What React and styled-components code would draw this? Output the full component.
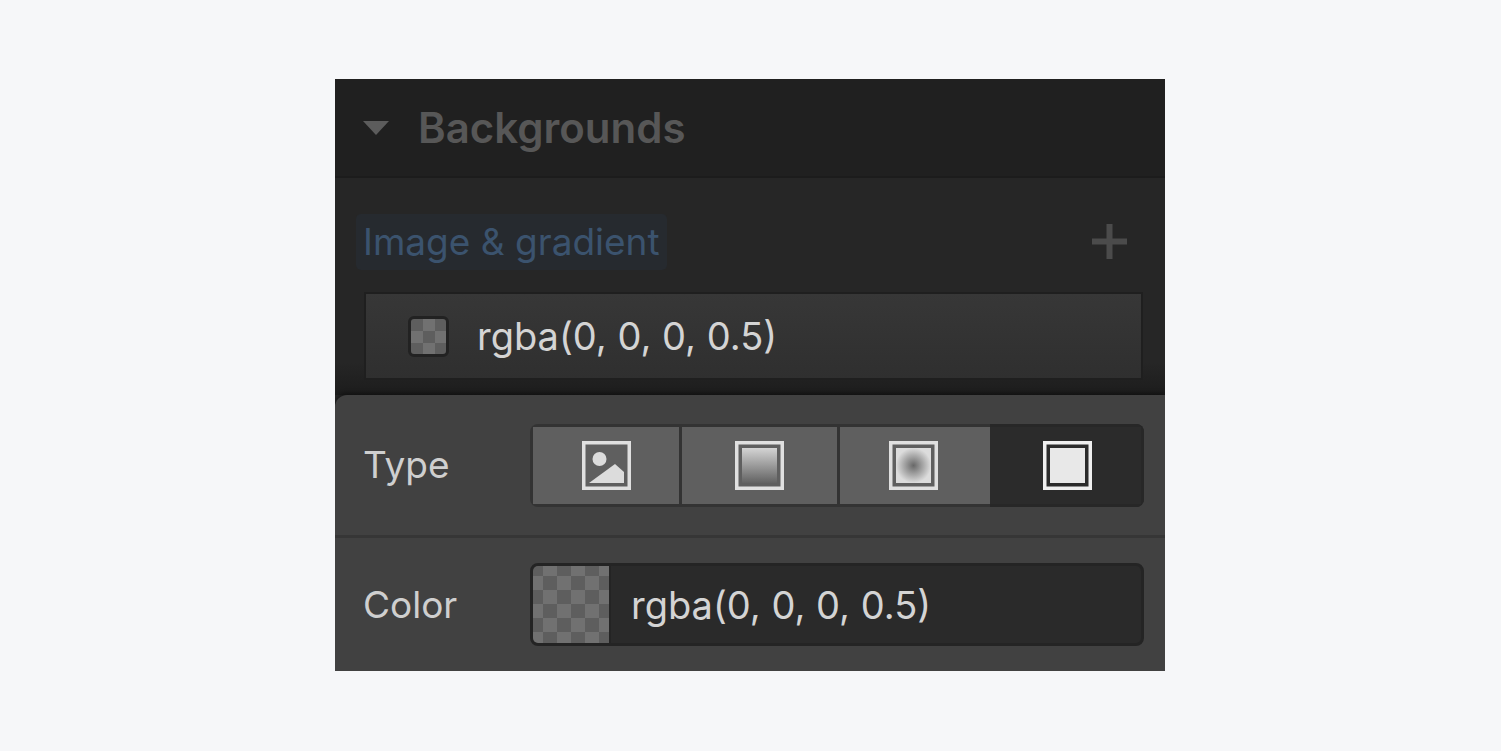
import React from "react";
import styled, { createGlobalStyle } from "styled-components";

const GlobalStyle = createGlobalStyle`
    html, body {
        margin: 0;
        padding: 0;
        background: #f6f7f9;
    }
    body {
        font-family: Inter, "Liberation Sans", sans-serif;
    }
`;

const CHECKER_SWATCH = `conic-gradient(#717171 25%, #5e5e5e 0 50%, #717171 0 75%, #5e5e5e 0)`;

const Page = styled.div`
    width: 1501px;
    height: 751px;
    padding: 79px 0 0 335px;
    box-sizing: border-box;
    overflow: hidden;
`;

const Panel = styled.div`
    width: 830px;
    height: 592px;
    display: flex;
    flex-direction: column;
    background: #262626;
    overflow: hidden;
`;

const Header = styled.div`
    height: 99px;
    flex: none;
    display: flex;
    align-items: center;
    gap: 29px;
    padding-left: 28px;
    box-sizing: border-box;
    background: #202020;
    border-bottom: 2px solid #1c1c1c;
`;

const Caret = styled.div`
    width: 0;
    height: 0;
    border-left: 13px solid transparent;
    border-right: 13px solid transparent;
    border-top: 14px solid #5c5c5c;
`;

const Title = styled.div`
    font-size: 42px;
    font-weight: 600;
    color: #575757;
    line-height: 50px;
`;

const Section = styled.div`
    height: 217px;
    flex: none;
    box-sizing: border-box;
    padding: 36px 24px 0 31px;
    background: linear-gradient(#262626 85%, #1c1c1c);
`;

const SectionHead = styled.div`
    display: flex;
    align-items: center;
    justify-content: space-between;
    height: 56px;
    margin-left: -10px;
    padding-right: 14px;
`;

const Tag = styled.div`
    height: 56px;
    display: flex;
    align-items: center;
    padding: 0 7px 2px;
    box-sizing: border-box;
    border-radius: 5px;
    background: #262a2f;
    font-size: 37px;
    color: #3b536e;
    white-space: nowrap;
`;

const AddIcon = styled.svg`
    width: 35px;
    height: 35px;
    margin-top: -1px;
    display: block;
`;

const LayerRow = styled.div`
    margin-top: 24px;
    height: 84px;
    display: flex;
    align-items: center;
    gap: 28px;
    padding-left: 42px;
    box-sizing: border-box;
    background: linear-gradient(#373737, #2f2f2f);
    box-shadow: 0 0 0 2px #1f1f1f;
`;

const MiniSwatch = styled.div`
    width: 35px;
    height: 35px;
    flex: none;
    border: 3px solid #222;
    border-radius: 6px;
    background: ${CHECKER_SWATCH};
    background-size: 24px 24px;
    background-origin: padding-box;
`;

const Value = styled.div`
    font-size: 38px;
    color: #d4d4d4;
    white-space: nowrap;
    line-height: 46px;
`;

const Popover = styled.div`
    flex: 1;
    background: #414141;
    border-top-left-radius: 12px;
    box-shadow: 0 -2px 4px rgba(0, 0, 0, 0.4);
    display: flex;
    flex-direction: column;
`;

const Row = styled.div`
    display: flex;
    align-items: center;
    height: ${(props) => props.$height}px;
    flex: none;
    padding-left: 28px;
    box-sizing: border-box;
    border-bottom: ${(props) => (props.$divider ? "3px solid #363636" : "none")};
`;

const RowLabel = styled.div`
    width: 167px;
    flex: none;
    font-size: 37px;
    color: #cfcfcf;
    line-height: 46px;
`;

const Segments = styled.div`
    width: 614px;
    height: 83px;
    margin-top: 1px;
    padding: 3px 0 3px 3px;
    display: flex;
    background: #333;
    border-radius: 8px;
    box-sizing: border-box;
    overflow: hidden;
`;

const Segment = styled.div`
    width: ${(props) => props.$width}px;
    flex: none;
    box-sizing: border-box;
    margin-right: ${(props) => (props.$gap ? "3px" : "0")};
    padding-right: ${(props) => props.$pushLeft || 0}px;
    display: flex;
    align-items: center;
    justify-content: center;
    background: #5f5f5f;
`;

const ActiveSegment = styled.div`
    width: 154px;
    flex: none;
    box-sizing: border-box;
    margin: -3px 0;
    padding-left: 3px;
    display: flex;
    align-items: center;
    justify-content: center;
    background: #2b2b2b;
    border: 3px solid #272727;
    border-left: none;
`;

const Glyph = styled.svg`
    width: 49px;
    height: 49px;
    display: block;
`;

const ColorInput = styled.div`
    width: 614px;
    height: 83px;
    display: flex;
    align-items: center;
    gap: 20px;
    background: #2a2a2a;
    border: 3px solid #242424;
    border-radius: 8px;
    box-sizing: border-box;
    overflow: hidden;
`;

const ColorSwatch = styled.div`
    width: 78px;
    height: 100%;
    flex: none;
    box-sizing: border-box;
    border-right: 2px solid #242424;
    background: ${CHECKER_SWATCH};
    background-size: 28px 28px;
    background-position: -4px -4px;
    background-origin: padding-box;
`;

const ImageGlyph = () => (
    <Glyph viewBox="0 0 49 49">
        <rect x="1.75" y="1.75" width="45.5" height="45.5" fill="none" stroke="#e0e0e0" strokeWidth="3.5" />
        <circle cx="17.5" cy="18" r="7" fill="#dcdcdc" />
        <path d="M7 42 L33 23 L42 31 V42 Z" fill="#dcdcdc" />
    </Glyph>
);

const LinearGlyph = () => (
    <Glyph viewBox="0 0 49 49">
        <defs>
            <linearGradient id="linearFill" x1="0" y1="0" x2="0" y2="1">
                <stop offset="0" stopColor="#d4d4d4" />
                <stop offset="1" stopColor="#626262" />
            </linearGradient>
        </defs>
        <rect x="1.75" y="1.75" width="45.5" height="45.5" fill="none" stroke="#e0e0e0" strokeWidth="3.5" />
        <rect x="7" y="7" width="35" height="35" fill="url(#linearFill)" />
    </Glyph>
);

const RadialGlyph = () => (
    <Glyph viewBox="0 0 49 49">
        <defs>
            <radialGradient id="radialFill" cx="0.5" cy="0.5" r="0.5">
                <stop offset="0" stopColor="#686868" />
                <stop offset="1" stopColor="#dcdcdc" />
            </radialGradient>
        </defs>
        <rect x="1.75" y="1.75" width="45.5" height="45.5" fill="none" stroke="#e0e0e0" strokeWidth="3.5" />
        <rect x="7" y="7" width="35" height="35" fill="url(#radialFill)" />
    </Glyph>
);

const SolidGlyph = () => (
    <Glyph viewBox="0 0 49 49">
        <rect x="1.75" y="1.75" width="45.5" height="45.5" fill="none" stroke="#efefef" strokeWidth="3.5" />
        <rect x="7" y="7" width="35" height="35" fill="#e8e8e8" />
    </Glyph>
);

const App = () => (
    <Page>
        <GlobalStyle />
        <Panel>
            <Header>
                <Caret />
                <Title>Backgrounds</Title>
            </Header>
            <Section>
                <SectionHead>
                    <Tag>Image &amp; gradient</Tag>
                    <AddIcon viewBox="0 0 35 35">
                        <path d="M14.5 0h6v14.5H35v6H20.5V35h-6V20.5H0v-6h14.5z" fill="#4b4b4b" />
                    </AddIcon>
                </SectionHead>
                <LayerRow>
                    <MiniSwatch />
                    <Value>rgba(0, 0, 0, 0.5)</Value>
                </LayerRow>
            </Section>
            <Popover>
                <Row $height={143} $divider>
                    <RowLabel>Type</RowLabel>
                    <Segments>
                        <Segment $width={146} $gap>
                            <ImageGlyph />
                        </Segment>
                        <Segment $width={155} $gap>
                            <LinearGlyph />
                        </Segment>
                        <Segment $width={150} $pushLeft={4}>
                            <RadialGlyph />
                        </Segment>
                        <ActiveSegment>
                            <SolidGlyph />
                        </ActiveSegment>
                    </Segments>
                </Row>
                <Row $height={133}>
                    <RowLabel>Color</RowLabel>
                    <ColorInput>
                        <ColorSwatch />
                        <Value>rgba(0, 0, 0, 0.5)</Value>
                    </ColorInput>
                </Row>
            </Popover>
        </Panel>
    </Page>
);

export default App;
